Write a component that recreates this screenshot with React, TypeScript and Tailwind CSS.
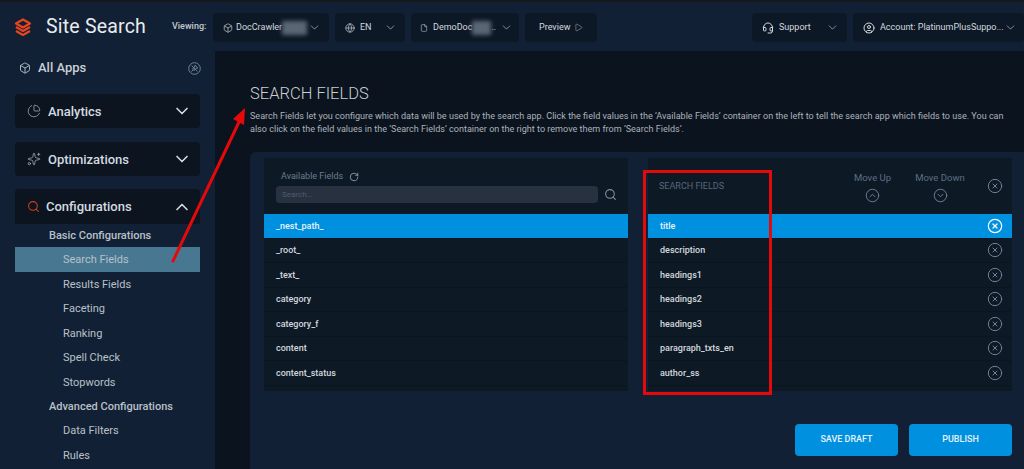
import {
  Box,
  ChartPie,
  ChevronDown,
  ChevronUp,
  CircleChevronDown,
  CircleChevronUp,
  CircleUser,
  CircleX,
  File,
  Globe,
  Headset,
  Play,
  RotateCw,
  Search,
  Sparkles,
} from "lucide-react";
import type { ReactNode } from "react";

const available = ["_nest_path_", "_root_", "_text_", "category", "category_f", "content", "content_status"];
const selected = ["title", "description", "headings1", "headings2", "headings3", "paragraph_txts_en", "author_ss"];

function Logo() {
  return (
    <svg width="18" height="19" viewBox="0 0 18 19" fill="none" stroke="#e8451c" strokeWidth="2.2" strokeLinejoin="round">
      <path d="M9 1.5 16 5.5 9 9.5 2 5.5Z" />
      <path d="M2 9 9 13 16 9" />
      <path d="M2 13 9 17 16 13" />
    </svg>
  );
}

function UnpinIcon() {
  return (
    <svg width="13" height="13" viewBox="0 0 13 13" fill="none" stroke="#6f8296" strokeWidth="1">
      <circle cx="6.5" cy="6.5" r="5.8" />
      <path d="M7 3.2 9.8 6 7.6 6.6 6.2 8.6 4.4 6.8 6.4 5.4Z" />
      <path d="M5 8 3.4 9.6M3.6 3.6 9.4 9.4" />
    </svg>
  );
}

function TopButton({ width, children }: { width: string; children: ReactNode }) {
  return <div className={`${width} h-[29px] pt-[1px] flex items-center rounded bg-[#0d1826] text-[9px] text-[#d3d8de] whitespace-nowrap`}>{children}</div>;
}

function NavCard({ icon, label }: { icon: ReactNode; label: string }) {
  return (
    <div className="h-[34px] mx-[15px] rounded bg-[#0b141f] flex items-center pl-[12px] pr-[8px] text-[13px] font-medium text-[#d5dae0]">
      <span className="w-[22px] flex">{icon}</span>
      <span className="flex-1 ml-[-1px] pt-[1px]">{label}</span>
      <ChevronDown size={20} className="text-[#d5dae0]" />
    </div>
  );
}

function SubItem({ label, active }: { label: string; active?: boolean }) {
  return (
    <div className={`mx-[15px] pl-[48px] pt-[1px] flex items-center text-[11px] text-[#b9c0c8] ${active ? "h-[25px] bg-[#487891]" : "h-[24.5px]"}`}>
      {label}
    </div>
  );
}

function SubHeading({ label, height }: { label: string; height: string }) {
  return <div className={`${height} pl-[49px] pt-[2px] flex items-center text-[11px] font-medium text-[#b9c0c8]`}>{label}</div>;
}

function FieldRow({ label, active, remove }: { label: string; active?: boolean; remove?: boolean }) {
  return (
    <div
      className={`h-[24.5px] pl-[12px] pr-[9px] flex items-center justify-between text-[9px] font-medium border-b border-[#0b151f] ${
        active ? "bg-[#0090e0] text-[#e6f3fb]" : "text-[#d3d8de]"
      }`}
    >
      <span className="pt-[1px]">{label}</span>
      {remove && <CircleX size={16} strokeWidth={active ? 1.8 : 1.5} className={active ? "text-white" : "text-[#6f8296]"} />}
    </div>
  );
}

export default function App() {
  return (
    <div className="relative w-[1024px] h-[469px] overflow-hidden flex flex-col bg-[#12213a] font-['Roboto',sans-serif]">
      <div className="h-[2px] bg-[#17181b]" />

      {/* Header */}
      <header className="h-[49px] shrink-0 flex items-center bg-[#122035] pt-[1px]">
        <div className="w-[46px] pl-[14px] flex">
          <Logo />
        </div>
        <div className="w-[126px] text-[19.5px] text-[#e8ebee] tracking-[0.2px]">Site Search</div>
        <div className="w-[41px] text-[9px] font-medium text-[#c3c9d0]">Viewing:</div>
        <div className="flex gap-[6px]">
          <TopButton width="w-[116px] pl-[10px]">
            <Box size={10} className="text-[#aab2bb] mr-[2px]" />
            <span className="ml-[1px]">DocCrawler</span>
            <span className="w-[25px] h-[14px] bg-[#5b6675] blur-[2px]" />
            <ChevronDown size={13} strokeWidth={1.4} className="ml-auto mr-[8px] text-[#aab2bb]" />
          </TopButton>
          <TopButton width="w-[70px] pl-[10px]">
            <Globe size={10} className="text-[#aab2bb] mr-[5px]" />
            <span>EN</span>
            <ChevronDown size={13} strokeWidth={1.4} className="ml-auto mr-[8px] text-[#aab2bb]" />
          </TopButton>
          <TopButton width="w-[108px] pl-[9px]">
            <File size={8} className="text-[#aab2bb] mr-[5px]" />
            <span>DemoDoc</span>
            <span className="w-[19px] h-[14px] bg-[#5b6675] blur-[2px]" />
            <span>..</span>
            <ChevronDown size={13} strokeWidth={1.4} className="ml-auto mr-[6px] text-[#aab2bb]" />
          </TopButton>
          <TopButton width="w-[72px] pl-[14px]">
            <span>Preview</span>
            <Play size={9} strokeWidth={1.4} className="ml-[4px] text-[#aab2bb]" />
          </TopButton>
        </div>
        <div className="ml-auto flex gap-[6px]">
          <TopButton width="w-[95px] pl-[10px]">
            <Headset size={12} className="text-[#d3d8de] mr-[5px]" />
            <span>Support</span>
            <ChevronDown size={13} strokeWidth={1.4} className="ml-auto mr-[8px] text-[#aab2bb]" />
          </TopButton>
          <TopButton width="w-[171px] pl-[10px]">
            <CircleUser size={12} className="text-[#d3d8de] mr-[5px]" />
            <span>Account: PlatinumPlusSuppo...</span>
            <ChevronDown size={13} strokeWidth={1.4} className="ml-auto mr-[7px] text-[#aab2bb]" />
          </TopButton>
        </div>
      </header>

      <div className="flex-1 flex min-h-0">
        {/* Sidebar */}
        <aside className="w-[215px] shrink-0 bg-[#122035] flex flex-col">
          <div className="h-[34px] mb-[9px] pl-[19px] pr-[14px] flex items-center text-[13px] font-medium text-[#c9cfd6]">
            <Box size={12} className="text-[#aab2bb] mr-[7px]" />
            <span className="flex-1">All Apps</span>
            <UnpinIcon />
          </div>
          <NavCard icon={<ChartPie size={14} strokeWidth={1.3} className="text-[#aab2bb]" />} label="Analytics" />
          <div className="h-[14px]" />
          <NavCard icon={<Sparkles size={14} strokeWidth={1.3} className="text-[#aab2bb]" />} label="Optimizations" />
          <div className="h-[13px]" />
          <div className="h-[35px] mx-[15px] rounded-t bg-[#0b141f] flex items-center pl-[12px] pr-[8px] text-[13px] font-medium text-[#d5dae0]">
            <span className="w-[19px] flex">
              <Search size={13} className="text-[#d0401c]" />
            </span>
            <span className="flex-1 pt-[1px]">Configurations</span>
            <ChevronUp size={20} />
          </div>
          <SubHeading label="Basic Configurations" height="h-[23px]" />
          <SubItem label="Search Fields" active />
          <SubItem label="Results Fields" />
          <SubItem label="Faceting" />
          <SubItem label="Ranking" />
          <SubItem label="Spell Check" />
          <SubItem label="Stopwords" />
          <SubHeading label="Advanced Configurations" height="h-[24px]" />
          <SubItem label="Data Filters" />
          <SubItem label="Rules" />
        </aside>

        {/* Content */}
        <main className="flex-1 bg-[#0b141e] flex flex-col pl-[35px] min-w-0">
          <h1 className="mt-[33px] h-[20px] flex items-center text-[16.5px] font-light text-[#c9ced4]">SEARCH FIELDS</h1>
          <p className="mt-[6px] w-[765px] text-[9.06px] leading-[13px] text-[#aab2bb]">
            Search Fields let you configure which data will be used by the search app. Click the field values in the ‘Available Fields’ container on the left to tell the search app which fields to use. You can also click on the field values in the ‘Search Fields’ container on the right to remove them from ‘Search Fields’.
          </p>
          <section className="mt-[16px] flex-1 rounded-tl-md bg-[#122035] px-[14px] pt-[6px] flex flex-col">
            <div className="flex gap-[20px] mr-[-2px]">
              <div className="w-[364px] h-[233px] bg-[#0e1926]">
                <div className="h-[56px] pl-[12px] pr-[11px] pt-[12px]">
                  <div className="pl-[5px] pt-[1px] flex items-center h-[12px] text-[9px] text-[#6c7b8d]">
                    Available Fields
                    <RotateCw size={10} className="ml-[6px] text-[#9aa6b3]" />
                  </div>
                  <div className="mt-[4px] flex items-center justify-between">
                    <input
                      readOnly
                      placeholder="Search..."
                      className="w-[322px] h-[17px] rounded-sm bg-[#283140] pl-[6px] text-[8px] outline-none placeholder:text-[#4f5c6c]"
                    />
                    <Search size={13} className="text-[#7d90a3]" />
                  </div>
                </div>
                {available.map((f, i) => (
                  <FieldRow key={f} label={f} active={i === 0} />
                ))}
              </div>
              <div className="w-[364px] h-[233px] bg-[#0e1926]">
                <div className="h-[56px] pl-[11px] pr-[9px] flex">
                  <div className="mt-[22px] h-[12px] flex items-center text-[9px] text-[#56677b] translate-y-[1px]">SEARCH FIELDS</div>
                  <div className="ml-auto mt-[13px] w-[37px] flex flex-col items-center text-[9.5px] text-[#5d6f84] whitespace-nowrap">
                    Move Up
                    <CircleChevronUp size={15} strokeWidth={1.5} className="mt-[3px] text-[#6f8296]" />
                  </div>
                  <div className="ml-[24px] mt-[13px] w-[50px] flex flex-col items-center text-[9.5px] text-[#5d6f84] whitespace-nowrap">
                    Move Down
                    <CircleChevronDown size={15} strokeWidth={1.5} className="mt-[3px] text-[#6f8296]" />
                  </div>
                  <CircleX size={16} strokeWidth={1.5} className="ml-[22px] mt-[20px] text-[#6f8296]" />
                </div>
                {selected.map((f, i) => (
                  <FieldRow key={f} label={f} active={i === 0} remove />
                ))}
              </div>
            </div>
            <div className="mt-[33px] mr-[-2px] flex justify-end gap-[11px]">
              <button className="w-[103px] h-[32px] rounded-sm bg-[#0090e0] text-[9px] font-medium text-[#e6f3fb]">SAVE DRAFT</button>
              <button className="w-[103px] h-[32px] rounded-sm bg-[#0090e0] text-[9px] font-medium text-[#e6f3fb]">PUBLISH</button>
            </div>
          </section>
        </main>
      </div>

      {/* Annotations drawn over the screenshot */}
      <div className="absolute left-[643px] top-[170px] w-[129px] h-[225px] border-[3px] border-[#e50909]" />
      <svg className="absolute left-0 top-0 pointer-events-none" width="1024" height="469">
        <line x1="173" y1="261" x2="239" y2="122" stroke="#e50909" strokeWidth="3" strokeLinecap="round" />
        <path d="M245 108 L233 119 L244 125 Z" fill="#e50909" />
      </svg>
    </div>
  );
}
